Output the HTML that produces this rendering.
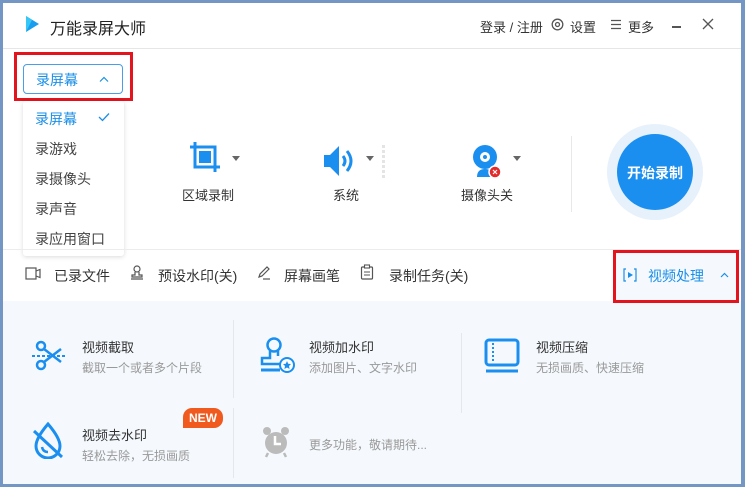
<!DOCTYPE html>
<html><head><meta charset="utf-8"><style>
*{margin:0;padding:0;box-sizing:border-box}
body{width:745px;height:487px;background:#7396c4;font-family:"Liberation Sans","Noto Sans CJK SC",sans-serif;overflow:hidden;position:relative}
.win{position:absolute;left:3px;top:3px;width:738px;height:481px;background:#fff;overflow:hidden}
.a{position:absolute;white-space:nowrap}
.t13{font-size:13px;color:#333}
.sub{font-size:12px;color:#999}
</style></head><body>
<div class="win">
<svg class="a" style="left:21px;top:12px" width="16" height="18"><path d="M2 1 L15 9 L2 17 Z" fill="#1a9cf0"/><path d="M2 1 L8 5 L2 17Z" fill="#35c7f5"/></svg>
<div class="a" style="left:47px;top:12px;font-size:16px;color:#222">万能录屏大师</div>
<div class="a t13" style="left:477px;top:14px">登录 / 注册</div>
<svg class="a" style="left:548px;top:15px" width="13" height="13"><circle cx="6.5" cy="6.5" r="5.3" fill="none" stroke="#555" stroke-width="1.3"/><circle cx="6.5" cy="6.5" r="2" fill="none" stroke="#555" stroke-width="1.3"/></svg>
<div class="a t13" style="left:567px;top:14px">设置</div>
<svg class="a" style="left:607px;top:16px" width="12" height="11"><path d="M1 1.5H11M1 5.5H11M1 9.5H11" stroke="#555" stroke-width="1.3"/></svg>
<div class="a t13" style="left:625px;top:14px">更多</div>
<div class="a" style="left:669px;top:23px;width:9px;height:1.5px;background:#555"></div>
<svg class="a" style="left:699px;top:15px" width="12" height="12"><path d="M1 1L11 11M11 1L1 11" stroke="#555" stroke-width="1.3"/></svg>
<div class="a" style="left:0;top:45px;width:738px;height:1px;background:#e6e6e6"></div>

<svg class="a" style="left:185px;top:137px" width="34" height="34"><path d="M7 2V27H32M2 7H27V32" fill="none" stroke="#1a8ff0" stroke-width="3"/><rect x="11" y="11" width="12" height="12" fill="#1a8ff0"/></svg>
<svg class="a" style="left:229px;top:153px" width="8" height="5"><path d="M0 0H8L4 5Z" fill="#666"/></svg>
<div class="a t13" style="left:179px;top:182px">区域录制</div>
<svg class="a" style="left:320px;top:142px" width="36" height="32"><path d="M1 10H7L16 1V31L7 22H1Z" fill="#1a8ff0"/><path d="M20 11Q24 16 20 21" fill="none" stroke="#1a8ff0" stroke-width="3"/><path d="M24 6Q32 16 24 26" fill="none" stroke="#1a8ff0" stroke-width="3"/></svg>
<svg class="a" style="left:363px;top:153px" width="8" height="5"><path d="M0 0H8L4 5Z" fill="#666"/></svg>
<div class="a" style="left:379px;top:142px;width:3px;height:34px;background:repeating-linear-gradient(#e4e4e4 0 3px,transparent 3px 5px)"></div>
<div class="a t13" style="left:330px;top:182px">系统</div>
<svg class="a" style="left:468px;top:140px" width="32" height="36"><circle cx="14" cy="14" r="12" fill="#1a8ff0"/><circle cx="14" cy="14" r="5" fill="#fff"/><circle cx="14" cy="14" r="2" fill="#1a8ff0"/><path d="M6 34Q6 26 14 26Q22 26 22 34Z" fill="#1a8ff0"/><circle cx="24" cy="29" r="6" fill="#e52a2a" stroke="#fff" stroke-width="1.5"/><path d="M22 27L26 31M26 27L22 31" stroke="#fff" stroke-width="1.2"/></svg>
<svg class="a" style="left:510px;top:153px" width="8" height="5"><path d="M0 0H8L4 5Z" fill="#666"/></svg>
<div class="a t13" style="left:458px;top:182px">摄像头关</div>
<div class="a" style="left:568px;top:133px;width:1px;height:76px;background:#e8e8e8"></div>
<div class="a" style="left:604px;top:121px;width:96px;height:96px;border-radius:50%;background:#e6f1fc"></div>
<div class="a" style="left:614px;top:131px;width:76px;height:76px;border-radius:50%;background:#1a8ff0"></div>
<div class="a" style="left:614px;top:160px;width:76px;text-align:center;color:#fff;font-size:14px;font-weight:bold">开始录制</div>

<div class="a" style="left:11px;top:49px;width:119px;height:49px;border:3px solid #e3141e"></div>
<div class="a" style="left:20px;top:61px;width:100px;height:30px;border:1px solid #4a9de8;border-radius:4px"></div>
<div class="a" style="left:33px;top:67px;font-size:14px;color:#1a8fe8">录屏幕</div>
<svg class="a" style="left:96px;top:73px" width="10" height="6"><path d="M1 5.5L5 1.5L9 5.5" fill="none" stroke="#1a8fe8" stroke-width="1.2"/></svg>
<div class="a" style="left:20px;top:98px;width:101px;height:155px;background:#fff;box-shadow:0 1px 5px rgba(0,0,0,.15);border-radius:3px"></div>
<div class="a" style="left:32px;top:106px;font-size:14px;color:#1a8fe8">录屏幕</div>
<svg class="a" style="left:95px;top:109px" width="12" height="10"><path d="M1 5L4.5 8.5L11 1.5" fill="none" stroke="#1a8fe8" stroke-width="1.3"/></svg>
<div class="a" style="left:32px;top:136px;font-size:14px;color:#444">录游戏</div>
<div class="a" style="left:32px;top:166px;font-size:14px;color:#444">录摄像头</div>
<div class="a" style="left:32px;top:196px;font-size:14px;color:#444">录声音</div>
<div class="a" style="left:32px;top:226px;font-size:14px;color:#444">录应用窗口</div>

<div class="a" style="left:0;top:246px;width:738px;height:1px;background:#ececec"></div>
<svg class="a" style="left:22px;top:264px" width="16" height="13"><rect x="1" y="1" width="10" height="11" fill="none" stroke="#555" stroke-width="1.2"/><path d="M11 4L15 2.5V10.5L11 9" fill="none" stroke="#555" stroke-width="1.2"/></svg>
<div class="a t13" style="left:51px;top:263px;font-size:14px">已录文件</div>
<svg class="a" style="left:127px;top:262px" width="14" height="15"><circle cx="7" cy="4" r="3" fill="none" stroke="#555" stroke-width="1.2"/><path d="M5 7V10H2V12H12V10H9V7M1 14H13" fill="none" stroke="#555" stroke-width="1.2"/></svg>
<div class="a t13" style="left:155px;top:263px;font-size:14px">预设水印(关)</div>
<svg class="a" style="left:254px;top:262px" width="14" height="15"><path d="M2 12L3 9L10 2L12 4L5 11Z" fill="none" stroke="#555" stroke-width="1.2"/><path d="M6 14H13" stroke="#555" stroke-width="1.2"/></svg>
<div class="a t13" style="left:281px;top:263px;font-size:14px">屏幕画笔</div>
<svg class="a" style="left:357px;top:261px" width="14" height="16"><rect x="1.5" y="3" width="11" height="12" rx="1" fill="none" stroke="#555" stroke-width="1.2"/><rect x="4.5" y="1" width="5" height="3" fill="#fff" stroke="#555" stroke-width="1.1"/><path d="M4 8H10M4 11H10" stroke="#555" stroke-width="1.1"/></svg>
<div class="a t13" style="left:386px;top:263px;font-size:14px">录制任务(关)</div>

<div class="a" style="left:0;top:298px;width:738px;height:183px;background:#f5f9fd"></div>
<div class="a" style="left:610px;top:247px;width:126px;height:53px;border:3px solid #e3141e;background:#f5f9fd"></div>
<svg class="a" style="left:620px;top:265px" width="14" height="14"><path d="M3 1H1V13H3M11 1H13V13H11" fill="none" stroke="#1a8fe8" stroke-width="1.2"/><path d="M5 4L10 7L5 10Z" fill="#1a8fe8"/></svg>
<div class="a" style="left:645px;top:263px;font-size:14px;color:#1a8fe8">视频处理</div>
<svg class="a" style="left:717px;top:269px" width="9" height="6"><path d="M1 5L4.5 1.5L8 5" fill="none" stroke="#1a8fe8" stroke-width="1.2"/></svg>

<div class="a" style="left:230px;top:317px;width:1px;height:78px;background:#e4e8ee"></div>
<div class="a" style="left:458px;top:330px;width:1px;height:80px;background:#e4e8ee"></div>
<div class="a" style="left:230px;top:405px;width:1px;height:70px;background:#e4e8ee"></div>

<svg class="a" style="left:26px;top:335px" width="40" height="34"><path d="M3 18H37" stroke="#1a8ff0" stroke-width="2" stroke-dasharray="3 2"/><circle cx="12" cy="8" r="4" fill="none" stroke="#1a8ff0" stroke-width="2.5"/><circle cx="12" cy="27" r="4" fill="none" stroke="#1a8ff0" stroke-width="2.5"/><path d="M15 11L32 24M15 24L32 11" stroke="#1a8ff0" stroke-width="2.5"/></svg>
<div class="a t13" style="left:79px;top:334px">视频截取</div>
<div class="a sub" style="left:79px;top:356px">截取一个或者多个片段</div>

<svg class="a" style="left:255px;top:333px" width="40" height="40"><circle cx="16" cy="9" r="6.5" fill="none" stroke="#1a8ff0" stroke-width="2.5"/><path d="M12 15V22H4V28H22" fill="none" stroke="#1a8ff0" stroke-width="2.5"/><path d="M20 15V20" stroke="#1a8ff0" stroke-width="2.5"/><path d="M3 34H22" stroke="#1a8ff0" stroke-width="3"/><circle cx="29" cy="29" r="7" fill="#fff" stroke="#1a8ff0" stroke-width="2"/><path d="M29 25L30.2 27.8L33 28L31 30L31.6 33L29 31.5L26.4 33L27 30L25 28L27.8 27.8Z" fill="#1a8ff0"/></svg>
<div class="a t13" style="left:306px;top:334px">视频加水印</div>
<div class="a sub" style="left:306px;top:356px">添加图片、文字水印</div>

<svg class="a" style="left:481px;top:335px" width="36" height="36"><rect x="2" y="2" width="32" height="25" rx="3" fill="none" stroke="#1a8ff0" stroke-width="3"/><path d="M9 5V24" stroke="#1a8ff0" stroke-width="2" stroke-dasharray="2 2"/><path d="M2 33H34" stroke="#1a8ff0" stroke-width="3"/></svg>
<div class="a t13" style="left:533px;top:334px">视频压缩</div>
<div class="a sub" style="left:533px;top:356px">无损画质、快速压缩</div>

<svg class="a" style="left:28px;top:418px" width="34" height="38"><path d="M17 3Q5 17 5 25A12 12 0 0 0 29 25Q29 17 17 3Z" fill="none" stroke="#1a8ff0" stroke-width="3"/><path d="M11 26Q12 31 17 31" fill="none" stroke="#1a8ff0" stroke-width="2.5"/><path d="M3 10L31 36" stroke="#1a8ff0" stroke-width="3"/></svg>
<div class="a" style="left:180px;top:405px;width:40px;height:20px;background:#f05a1e;border-radius:9px 9px 9px 0;color:#fff;font-size:12px;font-weight:bold;text-align:center;line-height:20px">NEW</div>
<div class="a t13" style="left:79px;top:422px">视频去水印</div>
<div class="a sub" style="left:79px;top:444px">轻松去除，无损画质</div>

<svg class="a" style="left:258px;top:423px" width="30" height="32"><circle cx="15" cy="17" r="11" fill="#bbb"/><circle cx="6" cy="5" r="4" fill="#bbb"/><circle cx="24" cy="5" r="4" fill="#bbb"/><path d="M14 10V18H20" fill="none" stroke="#fff" stroke-width="2.5"/><path d="M7 27L5 31M23 27L25 31" stroke="#bbb" stroke-width="2.5"/></svg>
<div class="a sub" style="left:306px;top:433px">更多功能，敬请期待...</div>
</div>
</body></html>
